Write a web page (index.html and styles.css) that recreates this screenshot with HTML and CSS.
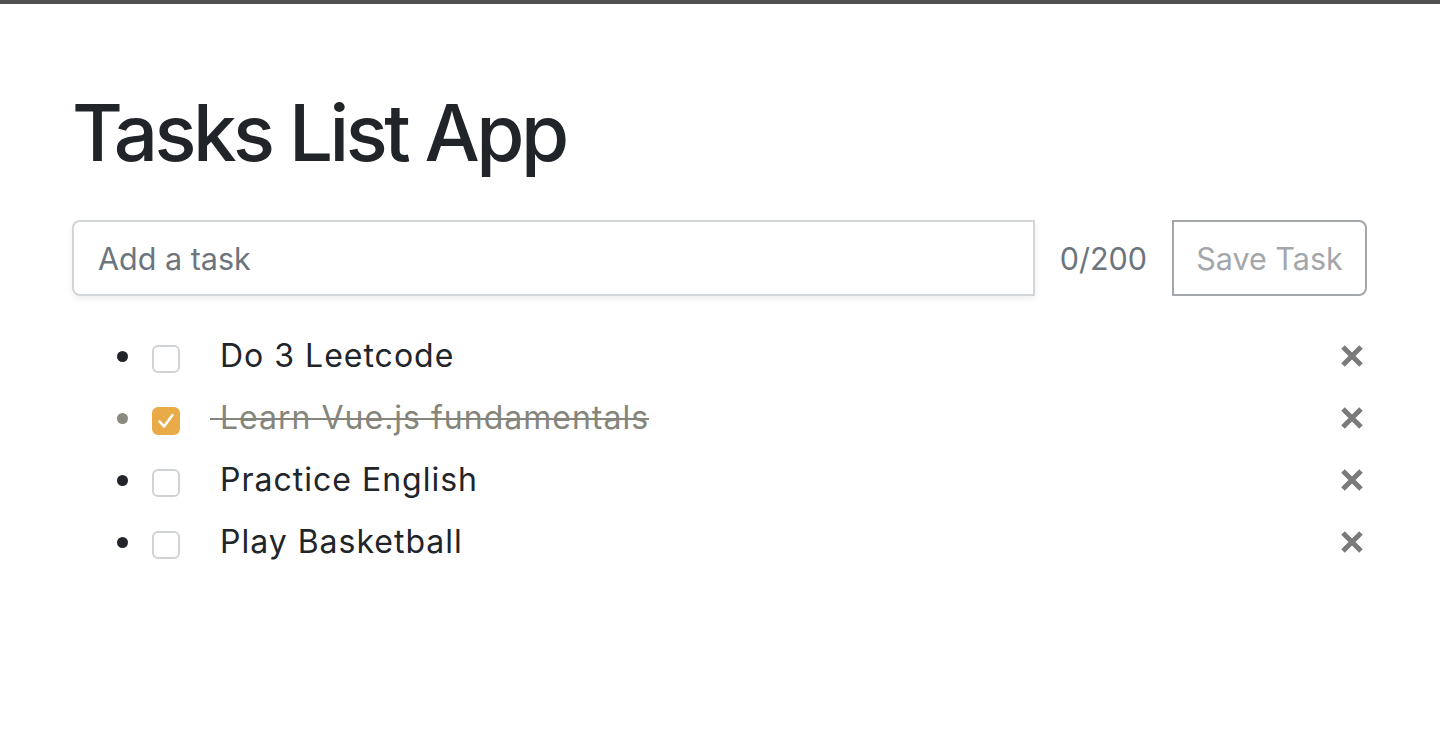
FILE: index.html
```html
<!DOCTYPE html>
<html lang="en">
<head>
<meta charset="utf-8">
<title>Tasks List App</title>
<link rel="stylesheet" href="styles.css">
</head>
<body>
<div class="topbar"></div>
<main class="container">
  <h1 class="title">Tasks List App</h1>
  <form class="input-group">
    <input class="task-input" type="text" placeholder="Add a task">
    <span class="counter">0/200</span>
    <button class="save-btn" type="button" disabled>Save Task</button>
  </form>
  <ul class="tasks">
    <li class="task">
      <span class="check"></span>
      <span class="label">&nbsp;Do 3 Leetcode</span>
      <svg class="remove" viewBox="0 0 24 24" width="24" height="24"><path d="M3 3L21 21M21 3L3 21" /></svg>
    </li>
    <li class="task done">
      <span class="check"><svg viewBox="0 0 28 28" width="28" height="28"><path d="M7.5 14.5L12 19.5L20.5 8" /></svg></span>
      <span class="label">&nbsp;Learn Vue.js fundamentals</span>
      <svg class="remove" viewBox="0 0 24 24" width="24" height="24"><path d="M3 3L21 21M21 3L3 21" /></svg>
    </li>
    <li class="task">
      <span class="check"></span>
      <span class="label">&nbsp;Practice English</span>
      <svg class="remove" viewBox="0 0 24 24" width="24" height="24"><path d="M3 3L21 21M21 3L3 21" /></svg>
    </li>
    <li class="task">
      <span class="check"></span>
      <span class="label">&nbsp;Play Basketball</span>
      <svg class="remove" viewBox="0 0 24 24" width="24" height="24"><path d="M3 3L21 21M21 3L3 21" /></svg>
    </li>
  </ul>
</main>
</body>
</html>
```

FILE: styles.css
```css
html, body {
  margin: 0;
  padding: 0;
  background: #ffffff;
}

body {
  font-family: Inter, "Liberation Sans", sans-serif;
  color: #212529;
  font-size: 32px;
}

.topbar {
  height: 4px;
  background: #505050;
}

.container {
  padding: 0 73px 0 72px;
}

.title {
  margin: 81px 0 39px;
  font-size: 78px;
  line-height: 96px;
  font-weight: 500;
  letter-spacing: -3.5px;
  color: #212529;
}

.input-group {
  display: flex;
  align-items: stretch;
  height: 76px;
  margin: 0;
}

.task-input {
  flex: 1;
  min-width: 0;
  box-sizing: border-box;
  height: 76px;
  border: 2px solid #d3d6d9;
  border-radius: 8px 0 0 8px;
  padding: 0 24px;
  font-family: inherit;
  font-size: 30.5px;
  color: #495057;
  box-shadow: 0 3px 6px rgba(0, 0, 0, 0.07);
  outline: none;
}

.task-input::placeholder {
  color: #6c757d;
}

.counter {
  display: flex;
  align-items: center;
  padding: 0 25px;
  color: #6c757d;
  font-size: 30.5px;
}

.save-btn {
  box-sizing: border-box;
  width: 195px;
  height: 76px;
  border: 2px solid #a3a7ab;
  border-radius: 0 8px 8px 0;
  background: #ffffff;
  color: #a3a7ab;
  font-family: inherit;
  font-size: 30.5px;
  padding: 0;
}

.tasks {
  list-style: none;
  margin: 29px 0 0;
  padding: 0;
}

.task {
  display: flex;
  align-items: center;
  height: 62px;
  padding-left: 45px;
}

.task::before {
  content: "";
  width: 11px;
  height: 11px;
  border-radius: 50%;
  background: #212529;
  margin-right: 24px;
  flex: none;
}

.check {
  box-sizing: border-box;
  width: 28px;
  height: 28px;
  border: 2px solid #d0d3d6;
  border-radius: 6px;
  background: #ffffff;
  flex: none;
  margin-top: 5px;
  display: flex;
  align-items: center;
  justify-content: center;
}

.label {
  margin-left: 30px;
  flex: 1;
  line-height: 48px;
  letter-spacing: 1px;
}

.remove {
  flex: none;
  margin-right: 3px;
  fill: none;
  stroke: #7a7a7a;
  stroke-width: 5;
}

.done::before {
  background: #8a8a80;
}

.done .check {
  background: #e8ab47;
  border-color: #e8ab47;
  overflow: visible;
}

.done .check svg {
  flex: none;
  margin: -2px;
}

.done .check path {
  fill: none;
  stroke: #ffffff;
  stroke-width: 2.6;
  stroke-linecap: round;
  stroke-linejoin: round;
}

.done .label {
  color: #85857b;
  text-decoration: line-through;
  text-decoration-thickness: 2px;
}
```
